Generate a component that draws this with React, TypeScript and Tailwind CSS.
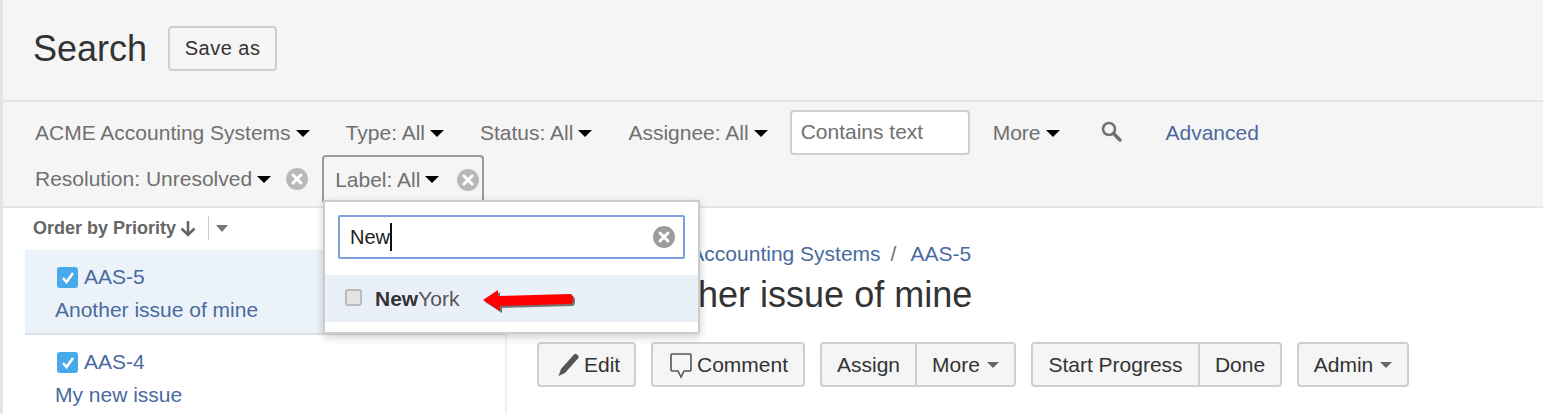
const Caret = ({ className = "border-t-black" }: { className?: string }) => (
  <span className={`inline-block w-0 h-0 border-x-[7px] border-x-transparent border-t-[7px] ${className}`} />
);

const ClearIcon = ({ className = "fill-[#b9b9b9]" }: { className?: string }) => (
  <svg width="22" height="22" viewBox="0 0 22 22" className={className}>
    <circle cx="11" cy="11" r="11" />
    <path d="M7 7l8 8M15 7l-8 8" stroke="#fff" strokeWidth="3" strokeLinecap="round" />
  </svg>
);

const Check = () => (
  <span className="flex items-center justify-center w-[21px] h-[21px] rounded-[3px] bg-[#47a9e9]">
    <svg width="14" height="13" viewBox="0 0 14 13" fill="none">
      <path d="M2 7l3.5 4L12 2" stroke="#fff" strokeWidth="2.6" />
    </svg>
  </span>
);

function Filter({ label, className = "" }: { label: string; className?: string }) {
  return (
    <div className={`flex items-center gap-[5px] ${className}`}>
      <span className="text-[21px] text-[#707070] whitespace-nowrap">{label}</span>
      <Caret />
    </div>
  );
}

const btn =
  "flex items-center h-[45px] border-2 border-[#cfcfcf] bg-[#f5f5f5] text-[21px] text-[#333] whitespace-nowrap";

function IssueRow({ id, title, active }: { id: string; title: string; active?: boolean }) {
  return (
    <div className={`h-[85px] pl-[30px] pt-[16px] ${active ? "bg-[#ebf2f9] border-b-2 border-[#dde1e6]" : ""}`}>
      <div className="flex items-center gap-[6px] pl-[2px]">
        <Check />
        <span className="text-[21px] leading-[22px] text-[#4a6a9f]">{id}</span>
      </div>
      <div className="text-[21px] leading-[24px] text-[#4a6a9f] mt-[10px]">{title}</div>
    </div>
  );
}

export default function App() {
  return (
    <div
      className="relative w-[1543px] h-[414px] overflow-hidden bg-white border-l-[3px] border-[#e5e5e5]"
      style={{ fontFamily: '"Liberation Sans", Arial, sans-serif' }}
    >
      {/* page header */}
      <div className="h-[100px] bg-[#f5f5f5] flex items-center pl-[30px] pb-[4px]">
        <h1 className="text-[36px] mt-[2px] text-[#333]">Search</h1>
        <button className="ml-[21px] w-[109px] h-[45px] rounded-[4px] border-2 border-[#cfcfcf] text-[20px] tracking-[0.5px] text-[#333]">
          Save as
        </button>
      </div>

      {/* filters */}
      <div className="relative h-[108px] bg-[#f5f5f5] border-y-2 border-[#e5e5e5] pl-[32px]">
        <div className="flex items-center h-[46px] mt-[8px]">
          <Filter label="ACME Accounting Systems" />
          <Filter label="Type: All" className="ml-[36px]" />
          <Filter label="Status: All" className="ml-[36px]" />
          <Filter label="Assignee: All" className="ml-[36px]" />
          <div className="ml-[22px] mb-[2px] w-[180px] h-[45px] flex items-center pl-[9px] bg-white border-2 border-[#cfcfcf] rounded-[4px] text-[21px] text-[#707070]">
            Contains text
          </div>
          <Filter label="More" className="ml-[23px]" />
          <svg width="22" height="22" viewBox="0 0 22 22" fill="none" className="ml-[41px] mb-[2px]">
            <circle cx="8" cy="8" r="6" stroke="#707070" strokeWidth="2.5" />
            <path d="M12.5 12.5L19 19" stroke="#707070" strokeWidth="3.5" strokeLinecap="round" />
          </svg>
          <span className="ml-[43px] text-[21px] text-[#4a6a9f]">Advanced</span>
        </div>
        <div className="flex items-center h-[46px]">
          <Filter label="Resolution: Unresolved" />
          <ClearIcon className="ml-[15px] fill-[#b9b9b9]" />
          <div className="ml-[14px] mb-[1px] h-[47px] w-[162px] flex items-center pl-[11px] border-2 border-b-0 border-[#999] rounded-t-[4px]">
            <Filter label="Label: All" />
            <ClearIcon className="ml-[18px] fill-[#b9b9b9]" />
          </div>
        </div>
      </div>

      <div className="flex h-[206px]">
        {/* issue list */}
        <div className="w-[482px] ml-[22px] border-r-2 border-[#eee]">
          <div className="h-[42px] flex items-center pl-[8px] pb-[2px]">
            <span className="text-[18px] font-bold text-[#666]">Order by Priority</span>
            <svg width="16" height="17" viewBox="0 0 16 17" fill="none" className="ml-[4px]">
              <path d="M8 1v14M1.5 8.5L8 15l6.5-6.5" stroke="#666" strokeWidth="2.6" />
            </svg>
            <span className="w-px h-[24px] bg-[#ccc] ml-[12px]" />
            <Caret className="ml-[7px] border-t-[#777] !border-x-[6px]" />
          </div>
          <IssueRow id="AAS-5" title="Another issue of mine" active />
          <IssueRow id="AAS-4" title="My new issue" />
        </div>

        {/* issue detail */}
        <div className="flex-1">
          <div className="pl-[118px] pt-[34px] flex text-[21px] leading-[24px] text-[#4a6a9f] whitespace-nowrap">
            <span>ACME Accounting Systems</span>
            <span className="ml-[10px] text-[#707070]">/</span>
            <span className="ml-[14px]">AAS-5</span>
          </div>
          <h2 className="pl-[117px] mt-[6px] text-[36px] leading-[46px] text-[#333] whitespace-nowrap">
            Another issue of mine
          </h2>
          <div className="flex mt-[24px] pl-[30px] gap-[15px]">
            <div className={`${btn} w-[99px] rounded-[4px] pl-[17px] gap-[4px]`}>
              <svg width="24" height="26" viewBox="0 0 24 26" className="fill-[#555]">
                <path d="M18 2.5q1.5-1.5 3 0l1 1q1.5 1.5 0 3L9 21l-6.5 3L5 17z" />
              </svg>
              Edit
            </div>
            <div className={`${btn} w-[154px] rounded-[4px] pl-[16px] gap-[4px]`}>
              <svg width="24" height="28" viewBox="0 0 24 28" fill="none">
                <path d="M3 3h18a1 1 0 0 1 1 1v15a1 1 0 0 1-1 1h-6l-3 6-3-6H3a1 1 0 0 1-1-1V4a1 1 0 0 1 1-1z" stroke="#555" strokeWidth="1.6" />
              </svg>
              Comment
            </div>
            <div className="flex">
              <div className={`${btn} w-[97px] justify-center rounded-l-[4px]`}>Assign</div>
              <div className={`${btn} w-[101px] -ml-[2px] justify-center gap-[7px] rounded-r-[4px]`}>
                More
                <Caret className="border-t-[#666] !border-x-[6px] !border-t-[6px]" />
              </div>
            </div>
            <div className="flex">
              <div className={`${btn} w-[169px] justify-center rounded-l-[4px]`}>Start Progress</div>
              <div className={`${btn} w-[84px] -ml-[2px] justify-center rounded-r-[4px]`}>Done</div>
            </div>
            <div className={`${btn} w-[112px] justify-center gap-[7px] rounded-[4px]`}>
              Admin
              <Caret className="border-t-[#666] !border-x-[6px] !border-t-[6px]" />
            </div>
          </div>
        </div>
      </div>

      {/* label dropdown */}
      <div className="absolute left-[320px] top-[200px] w-[377px] h-[134px] bg-white border-2 border-[#ccc] rounded-b-[3px] shadow-[0_3px_8px_rgba(0,0,0,0.2)]">
        <div className="mx-[13px] mt-[13px] h-[44px] flex items-center justify-between pl-[10px] pr-[8px] border-2 border-[#7f9fdf] rounded-[2px]">
          <span className="text-[20px] text-[#222] border-r-2 border-[#111] leading-[28px]">New</span>
          <ClearIcon className="fill-[#9d9d9d]" />
        </div>
        <div className="mt-[16px] h-[47px] bg-[#e9f0f8] flex items-center pl-[20px]">
          <span className="w-[17px] h-[17px] rounded-[3px] border-2 border-[#bbb] bg-[#e4e4e4] mb-[3px]" />
          <span className="ml-[13px] text-[21px] text-[#555]">
            <b className="text-[#333]">New</b>York
          </span>
        </div>
      </div>

      {/* annotation arrow */}
      <svg width="96" height="30" viewBox="0 0 96 30" className="absolute left-[479px] top-[286px]">
        <path d="M1 14L16 4v6l72-2q3 0 3 5t-3 5l-70 2v5z" fill="#222" opacity="0.6" transform="translate(2 2)" />
        <path d="M1 14L16 4v6l72-2q3 0 3 5t-3 5l-70 2v5z" fill="#f00" />
      </svg>
    </div>
  );
}
